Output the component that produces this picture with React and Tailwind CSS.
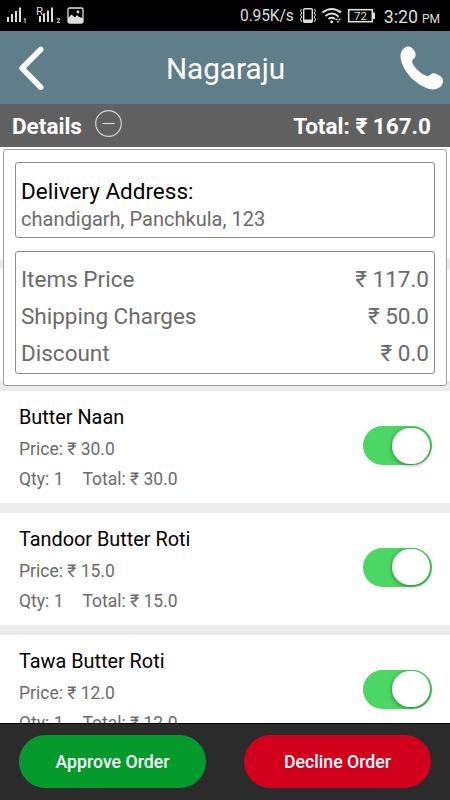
import React, { useState } from 'react';

const ORDER_ITEMS = [
  { id: 1, name: 'Butter Naan', price: '30.0', qty: 1, total: '30.0' },
  { id: 2, name: 'Tandoor Butter Roti', price: '15.0', qty: 1, total: '15.0' },
  { id: 3, name: 'Tawa Butter Roti', price: '12.0', qty: 1, total: '12.0' },
];

const CHARGES = [
  { label: 'Items Price', amount: '117.0' },
  { label: 'Shipping Charges', amount: '50.0' },
  { label: 'Discount', amount: '0.0' },
];

/**
 * Android status bar with signal, network speed, battery and clock
 */
function StatusBar() {
  return (
    <div className="flex h-[31px] shrink-0 items-center bg-black text-[#dedede]">
      {/* SIM signals and picture notification */}
      <svg width="90" height="31" viewBox="0 0 90 31" fill="#dedede">
        <path d="M7 17h2v5H7zM11 14h2v8h-2zM15 11h2v11h-2zM19 7.500h2V22h-2z" />
        <path d="M39 16h2v6h-2zM43 13.500h2v8.500h-2zM47 10.500h2V22h-2zM51 7.500h2V22h-2z" />
        <text x="23" y="22.500" fontSize="6.500" fontWeight="700">1</text>
        <text x="36" y="14.500" fontSize="11.500">R</text>
        <text x="56.500" y="22.500" fontSize="6.500" fontWeight="700">2</text>
        <rect x="68" y="8" width="15" height="15" rx="1.500" fill="none" stroke="#dedede" strokeWidth="1.300" />
        <path d="M68 18l3.500-3.500 3.500 3 2-2.500 2 2 4 1v5H68z" />
        <circle cx="78" cy="12" r="1.400" />
      </svg>
      <span className="ml-auto pt-[2px] text-[15.600px] tracking-[-0.150px]">0.95K/s</span>
      <svg className="ml-[5px]" width="79" height="31" viewBox="0 0 79 31" fill="none" stroke="#dedede">
        {/* vibrate */}
        <rect x="4.700" y="8.700" width="8.600" height="13.600" rx="1" strokeWidth="1.400" />
        <path d="M5 21h8" strokeWidth="3" />
        <path d="M2.500 9l-1 2 1.300 2-1.300 2 1.300 2-1.300 2 1 3M15.500 9l1 2-1.300 2 1.300 2-1.300 2 1.300 2-1 3" strokeWidth="1" />
        {/* wifi */}
        <path d="M23.500 12.500Q32.700 5.500 42 12.500" strokeWidth="2" />
        <path d="M26.500 16Q32.700 11 39 16" strokeWidth="2" />
        <path d="M29.500 19Q32.700 16.500 36 19" strokeWidth="2" />
        <circle cx="32.700" cy="21.700" r="1.500" fill="#dedede" stroke="none" />
        <path d="M39 15.500v2M36.500 19.500h2M39.500 19.500h2M39 21v1.500" strokeWidth="1.500" />
        {/* battery */}
        <rect x="49.700" y="9.700" width="23.600" height="12" strokeWidth="1.600" />
        <path d="M75 12.500v6.500" strokeWidth="2" />
        <text x="61.500" y="19.700" textAnchor="middle" fontSize="11.500" fill="#dedede" stroke="none">72</text>
      </svg>
      <span className="ml-[6px] mr-[10px] flex items-baseline gap-[4px] pt-[2px]">
        <span className="text-[17.800px] leading-none">3:20</span>
        <span className="text-[12px] leading-none">PM</span>
      </span>
    </div>
  );
}

function Header() {
  return (
    <div className="flex h-[73px] shrink-0 items-center bg-[#607d8a] pl-[18px] pr-[7px] text-white">
      <button className="w-[44px]">
        <svg width="27" height="44" viewBox="0 0 27 44" fill="none" stroke="white" strokeWidth="5.500" strokeLinecap="round" strokeLinejoin="round">
          <path d="M22.700 3.500L4 22.300l18.700 19" />
        </svg>
      </button>
      <h1 className="flex-1 pr-[11px] pt-[3px] text-center text-[29.700px]">Nagaraju</h1>
      <button className="w-[43px]">
        <svg width="43" height="44" viewBox="0 0 43 44" fill="white">
          <path d="M6 1C9-.5 13 1.500 15 6c1.500 3.500 0 6-2 7.500-1.200 1-1.100 2.500-.4 4 3 5.500 8 10 13.500 12.300 1.500.6 3 .4 4-.8C32.500 26 36 27 40 30c3.500 2.500 3.500 4.500 2.500 7.500-1.500 4.500-7.500 7-13 5.500C15.500 39 3 25.500.7 12.500-.2 7.500 2 3 6 1z" />
        </svg>
      </button>
    </div>
  );
}

function DetailsBar({ open, onToggle }) {
  return (
    <div className="flex h-[43px] shrink-0 items-center bg-[#606060] pl-[12px] pr-[19px] text-[22.500px] font-bold text-white">
      <span className="pt-[2px]">Details</span>
      <button onClick={onToggle} className="mb-[4px] ml-[13px]">
        <svg width="27" height="27" viewBox="0 0 27 27" fill="none" stroke="#d4d4d4" strokeWidth="1.200">
          <circle cx="13.500" cy="13.500" r="12.800" />
          <path d="M7.500 13.500h12" />
          {!open && <path d="M13.500 7.500v12" />}
        </svg>
      </button>
      <span className="ml-auto pt-[2px]">Total: ₹ 167.0</span>
    </div>
  );
}

/**
 * Address and price summary shown on top of the item list
 */
function DetailsPanel() {
  return (
    <div className="absolute left-[3px] top-[2px] h-[237px] w-[444px] rounded-[3px] border border-[#a0a0a0] bg-white px-[11px] pt-[12px]">
      <div className="h-[76px] rounded-[3px] border border-[#8c8c8c] px-[5px] pt-[14px]">
        <p className="text-[22.500px] leading-[28px] text-black">Delivery Address:</p>
        <p className="text-[20.050px] leading-[29px] text-[#6b6b6b]">chandigarh, Panchkula, 123</p>
      </div>
      <div className="mt-[13px] h-[123px] rounded-[3px] border border-[#8c8c8c] px-[5px] pt-[9px]">
        {CHARGES.map((charge) => (
          <div key={charge.label} className="flex justify-between text-[22.500px] leading-[37px] text-[#6b6b6b]">
            <span>{charge.label}</span>
            <span>₹ {charge.amount}</span>
          </div>
        ))}
      </div>
    </div>
  );
}

function Toggle({ checked, onChange }) {
  return (
    <button
      onClick={onChange}
      className={`flex h-[39px] w-[69px] items-center rounded-full px-[2px] ${checked ? 'justify-end bg-[#4bd763]' : 'justify-start bg-gray-300'}`}
    >
      <span className="h-[36px] w-[38px] rounded-full bg-white shadow-[0_1px_4px_rgba(0,0,0,0.45)]" />
    </button>
  );
}

function ItemRow({ item }) {
  const [checked, setChecked] = useState(true);

  return (
    <div className="flex h-[121.800px] shrink-0 justify-between border-b-[10px] border-[#ececec] bg-white pl-[19px] pr-[18px]">
      <div className="pt-[12px] text-[17.500px] leading-[30px] text-[#6b6b6b]">
        <p className="mb-px text-[19.850px] text-black">{item.name}</p>
        <p>Price: ₹ {item.price}</p>
        <p className="flex gap-[19px]">
          <span>Qty: {item.qty}</span>
          <span>Total: ₹ {item.total}</span>
        </p>
      </div>
      <div className="pt-[35px]">
        <Toggle checked={checked} onChange={() => setChecked(!checked)} />
      </div>
    </div>
  );
}

function App() {
  const [open, setOpen] = useState(true);

  return (
    <div className="flex h-[800px] w-[450px] flex-col overflow-hidden bg-white font-[Roboto,sans-serif]">
      <StatusBar />
      <Header />
      <DetailsBar open={open} onToggle={() => setOpen(!open)} />

      <div className="relative min-h-0 flex-1 overflow-hidden">
        {/* Rows scrolled behind the details panel */}
        <div className="h-[122px] border-b-[10px] border-[#ececec]" />
        <div className="h-[122px] border-b-[10px] border-[#ececec]" />
        {ORDER_ITEMS.map((item) => (
          <ItemRow key={item.id} item={item} />
        ))}
        {open && <DetailsPanel />}
      </div>

      {/* Order actions */}
      <div className="flex h-[77px] shrink-0 justify-between border-t border-black bg-[#2b2b2b] px-[19px] pt-[11px] text-[17.700px] font-medium text-white">
        <button className="h-[53px] w-[187px] rounded-full bg-[#049a2c] pt-px">Approve Order</button>
        <button className="h-[53px] w-[187px] rounded-full bg-[#d1001c] pt-px">Decline Order</button>
      </div>
    </div>
  );
}

export default App;
